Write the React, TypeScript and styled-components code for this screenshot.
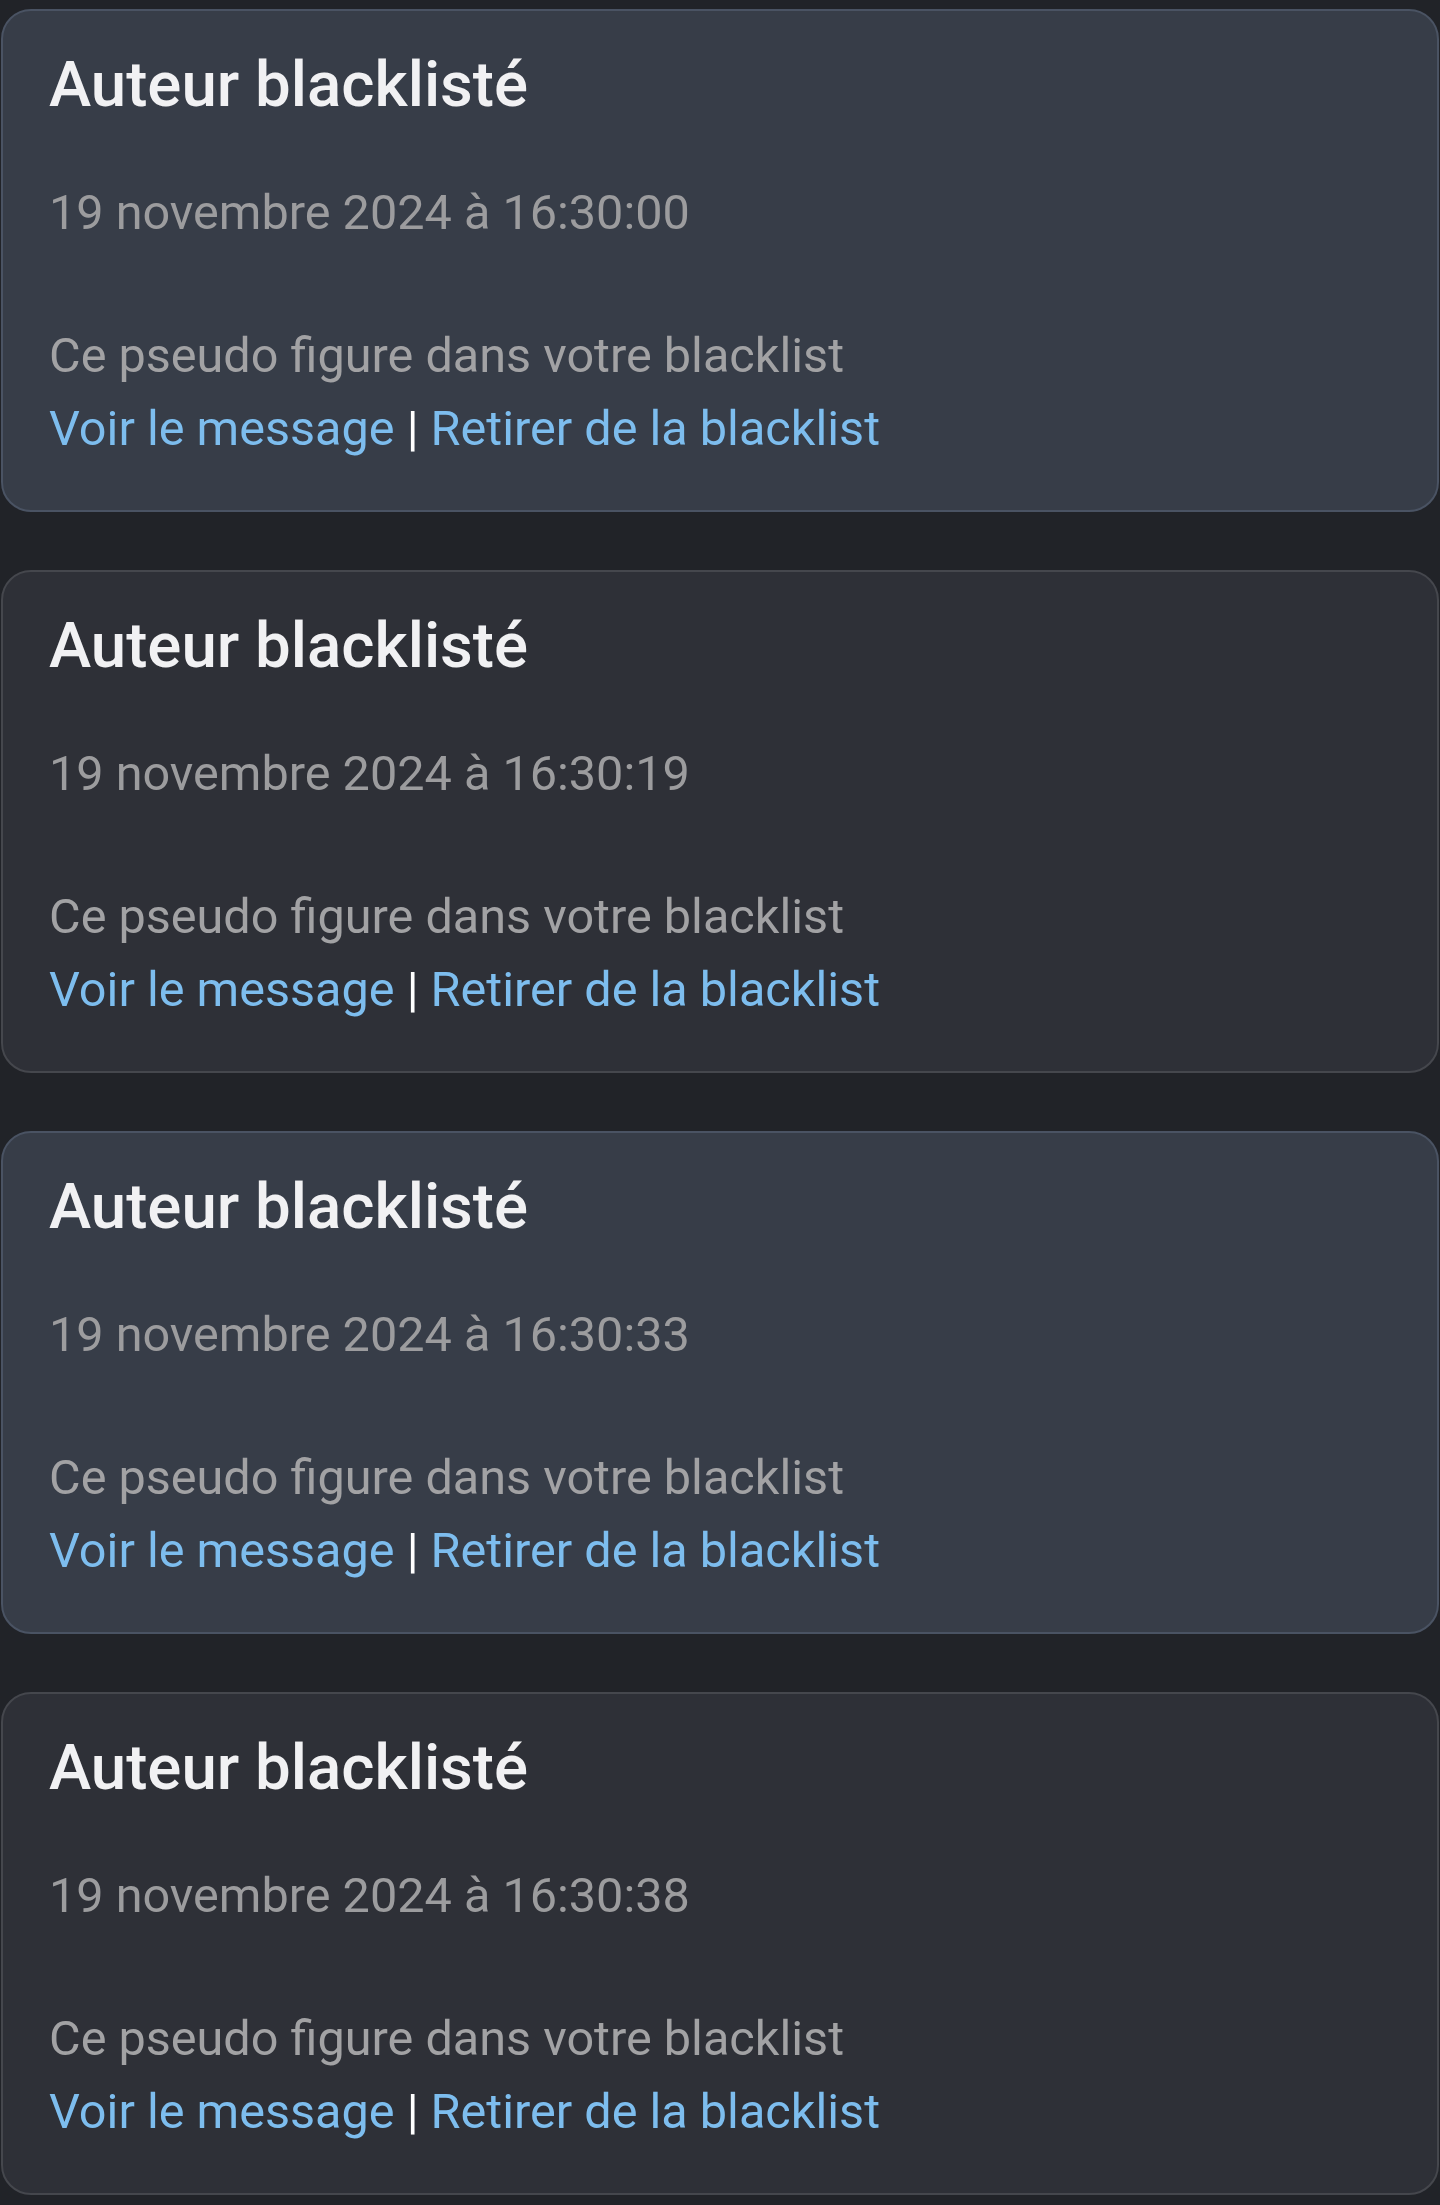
import styled, { createGlobalStyle } from 'styled-components';

const GlobalStyle = createGlobalStyle`
  html, body {
    margin: 0;
    padding: 0;
    background: #212328;
  }
  body {
    font-family: Roboto, "Noto Sans", "Liberation Sans", sans-serif;
    -webkit-font-smoothing: antialiased;
  }
`;

const NotificationList = styled.div`
  display: flex;
  flex-direction: column;
  gap: 58px;
  padding: 9px 1px 10px 1px;
`;

const NotificationCard = styled.div<{ $highlighted: boolean }>`
  display: flex;
  flex-direction: column;
  box-sizing: border-box;
  padding: 36px 45px 45px 46px;
  border-radius: 30px;
  border: 2px solid ${(p) => (p.$highlighted ? '#4a5363' : '#45474d')};
  background: ${(p) => (p.$highlighted ? '#373d48' : '#2e3037')};
`;

const CardTitle = styled.h3`
  margin: 0 0 60px 0;
  font-size: 63.6px;
  line-height: 76px;
  font-weight: 500;
  color: #f1f1f3;
`;

const CardDate = styled.p`
  margin: 0 0 76px 0;
  font-size: 48.6px;
  line-height: 60px;
  color: #9c9c9e;
`;

const CardBody = styled.div`
  font-size: 48.6px;
  line-height: 73px;
  color: #a2a2a4;
`;

const ActionLine = styled.div`
  color: #7dbdee;
  white-space: pre;
`;

const ActionLink = styled.a`
  color: #7dbdee;
  text-decoration: none;
  cursor: pointer;
`;

const Separator = styled.span`
  color: #ffffff;
`;

const notifications = [
  { id: 1, date: '19 novembre 2024 à 16:30:00' },
  { id: 2, date: '19 novembre 2024 à 16:30:19' },
  { id: 3, date: '19 novembre 2024 à 16:30:33' },
  { id: 4, date: '19 novembre 2024 à 16:30:38' },
];

function App() {
  return (
    <>
      <GlobalStyle />
      <NotificationList>
        {notifications.map((item, index) => (
          <NotificationCard key={item.id} $highlighted={index % 2 === 0}>
            <CardTitle>Auteur blacklisté</CardTitle>
            <CardDate>{item.date}</CardDate>
            <CardBody>
              <div>Ce pseudo figure dans votre blacklist</div>
              <ActionLine>
                <ActionLink>Voir le message</ActionLink>
                <Separator>{' | '}</Separator>
                <ActionLink>Retirer de la blacklist</ActionLink>
              </ActionLine>
            </CardBody>
          </NotificationCard>
        ))}
      </NotificationList>
    </>
  );
}

export default App;
